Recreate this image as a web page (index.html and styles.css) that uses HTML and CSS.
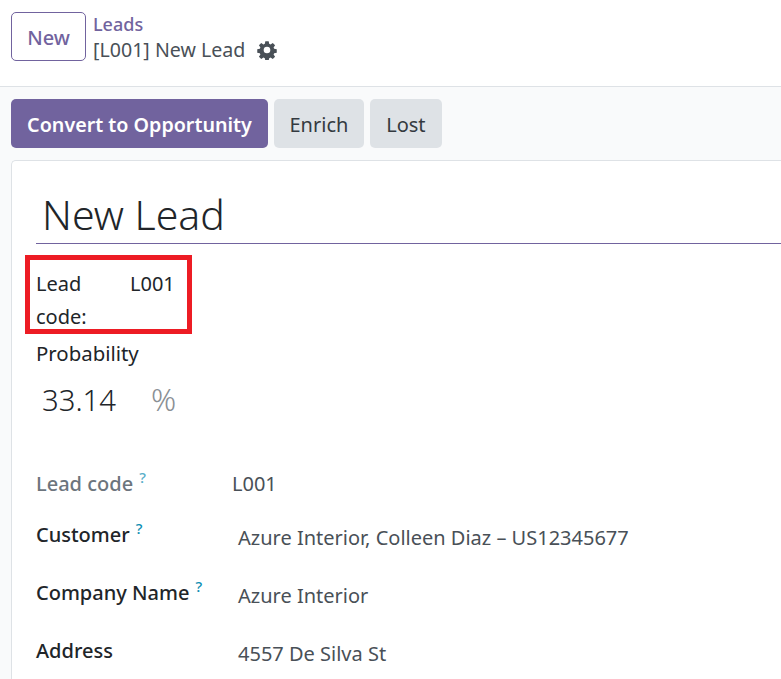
FILE: index.html
```html
<!DOCTYPE html>
<html lang="en">
<head>
    <meta charset="UTF-8">
    <meta name="viewport" content="width=device-width, initial-scale=1.0">
    <title>New Lead</title>
    <link rel="stylesheet" href="styles.css">
</head>
<body>
    <header class="control-panel">
        <button class="btn-new">New</button>
        <div class="breadcrumb">
            <a class="crumb-link">Leads</a>
            <div class="crumb-current">
                <span>[L001] New Lead</span>
                <svg class="gear" viewBox="0 0 24 24" width="20" height="20">
                    <path fill="#495057" fill-rule="evenodd" d="M10 1.5h4l.6 3.1 1.7.7 2.6-1.8 2.8 2.8-1.8 2.6.7 1.7 3.1.6v4l-3.1.6-.7 1.7 1.8 2.6-2.8 2.8-2.6-1.8-1.7.7-.6 3.1h-4l-.6-3.1-1.7-.7-2.6 1.8-2.8-2.8 1.8-2.6-.7-1.7-3.1-.6v-4l3.1-.6.7-1.7-1.8-2.6 2.8-2.8 2.6 1.8 1.7-.7zM12 8a4 4 0 1 0 0 8 4 4 0 0 0 0-8z"/>
                </svg>
            </div>
        </div>
    </header>

    <main class="content">
        <div class="statusbar">
            <button class="btn btn-primary">Convert to Opportunity</button>
            <button class="btn btn-secondary">Enrich</button>
            <button class="btn btn-secondary btn-lost">Lost</button>
        </div>

        <section class="sheet">
            <h1 class="lead-title">New Lead</h1>

            <div class="highlight">
                <div class="highlight-label">Lead code:</div>
                <div class="highlight-value">L001</div>
            </div>

            <div class="probability">
                <div class="probability-label">Probability</div>
                <div class="probability-value">
                    <span class="probability-number">33.14</span>
                    <span class="probability-unit">%</span>
                </div>
            </div>

            <div class="fields">
                <div class="field field-code">
                    <div class="field-label muted">Lead code<sup>?</sup></div>
                    <div class="field-value plain">L001</div>
                </div>
                <div class="field field-customer">
                    <div class="field-label">Customer<sup>?</sup></div>
                    <div class="field-value">Azure Interior, Colleen Diaz – US12345677</div>
                </div>
                <div class="field field-company">
                    <div class="field-label">Company Name<sup>?</sup></div>
                    <div class="field-value">Azure Interior</div>
                </div>
                <div class="field field-address">
                    <div class="field-label">Address</div>
                    <div class="field-value">4557 De Silva St</div>
                </div>
            </div>
        </section>
    </main>
</body>
</html>
```

FILE: styles.css
```css
* {
    box-sizing: border-box;
}
html, body {
    height: 100%;
}
body {
    display: flex;
    flex-direction: column;
    margin: 0;
    font-family: "Noto Sans", sans-serif;
    font-size: 20px;
    color: #212529;
    background-color: #f9fafb;
    overflow: hidden;
}
.control-panel {
    display: flex;
    align-items: flex-start;
    gap: 7px;
    height: 87px;
    flex-shrink: 0;
    padding: 11px 11px 0;
    background-color: white;
    border-bottom: 1px solid #dee2e6;
}
.btn-new {
    width: 75px;
    height: 49px;
    margin-top: 1px;
    padding: 1px 0 0;
    font: 500 20px "Noto Sans", sans-serif;
    color: #71639e;
    background-color: white;
    border: 1px solid #71639e;
    border-radius: 5px;
}
.breadcrumb {
    display: flex;
    flex-direction: column;
    line-height: 26px;
}
.crumb-link {
    font-size: 18px;
    font-weight: 500;
    color: #71639e;
}
.crumb-current {
    display: flex;
    align-items: center;
    gap: 12px;
    font-size: 19.6px;
    color: #495057;
}
.gear {
    display: block;
}
.content {
    display: flex;
    flex-direction: column;
    flex: 1;
    min-height: 0;
    padding: 12px 0 0 11px;
}
.statusbar {
    display: flex;
    gap: 6px;
    margin-bottom: 12px;
}
.btn {
    height: 49px;
    padding: 1px 15.5px 0;
    font: 400 20px "Noto Sans", sans-serif;
    white-space: nowrap;
    border: none;
    border-radius: 5px;
}
.btn-primary {
    width: 257px;
    padding: 1px 0 0;
    color: white;
    font-size: 19.7px;
    font-weight: 600;
    background-color: #71639e;
}
.btn-secondary {
    color: #343a40;
    background-color: #dee2e6;
}
.btn-lost {
    width: 72px;
    padding: 1px 0 0;
}
.sheet {
    flex: 1;
    min-height: 0;
    padding: 24px 0 0 24px;
    background-color: white;
    border: 1px solid #dee2e6;
    border-right: none;
    border-bottom: none;
    border-radius: 5px 0 0 0;
}
.lead-title {
    margin: 0;
    height: 59px;
    padding-left: 6px;
    font-size: 41px;
    font-weight: 300;
    line-height: 59px;
    border-bottom: 1px solid #71639e;
}
.highlight {
    display: flex;
    width: 167px;
    height: 79px;
    margin: 11px 0 0 -11px;
    padding: 7px 0 0 6px;
    line-height: 33px;
    border: 5px solid #ed1c24;
}
.highlight-label {
    width: 94px;
}
.probability {
    margin-top: 1px;
}
.probability-label {
    font-size: 20.4px;
    line-height: 36px;
}
.probability-value {
    display: flex;
    align-items: baseline;
    gap: 35px;
    padding: 7px 0 0 6px;
    font-size: 29.3px;
    font-weight: 300;
    line-height: 42px;
}
.probability-unit {
    font-size: 31px;
    color: #8a8f94;
}
.fields {
    margin-top: 49px;
}
.field {
    display: flex;
}
.field-label {
    width: 196px;
    font-weight: 500;
}
.field-label sup {
    margin-left: 6px;
    font-size: 15px;
    font-weight: 500;
    line-height: 0;
    color: #0f8fb3;
}
.muted {
    color: #6c757d;
}
.muted sup {
    color: #5aaec9;
}
.field-value {
    padding: 2px 0 0 6px;
    color: #495057;
}
.plain {
    padding: 0;
}
.field-code {
    height: 52px;
}
.field-customer,
.field-company {
    height: 58px;
}
.field-customer .field-label,
.field-company .field-label,
.field-address .field-label {
    margin-top: -1px;
}
```
